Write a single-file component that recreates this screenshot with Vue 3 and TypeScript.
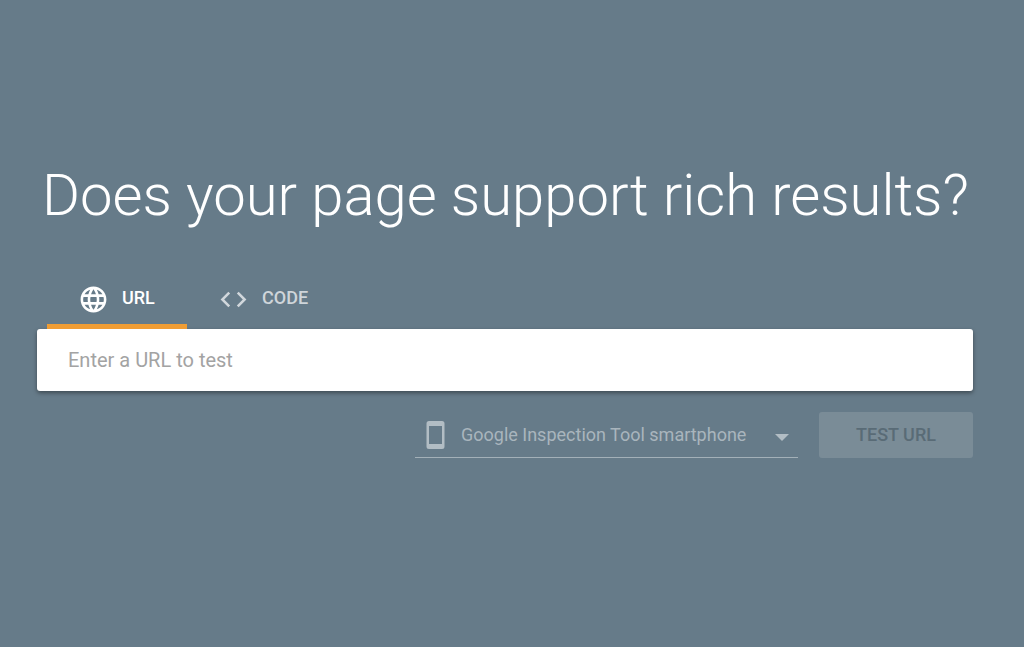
<script setup lang="ts">
import { ref } from 'vue'

type Mode = 'url' | 'code'

const mode = ref<Mode>('url')
const address = ref('')
const agent = ref('smartphone')
</script>

<template>
  <main class="page">
    <h1 class="title">Does your page support rich results?</h1>

    <div class="tabs" role="tablist">
      <button
        class="tab"
        :class="{ active: mode === 'url' }"
        type="button"
        role="tab"
        :aria-selected="mode === 'url'"
        @click="mode = 'url'"
      >
        <svg class="tab-icon" viewBox="0 0 24 24" aria-hidden="true">
          <path d="M11.99 2C6.47 2 2 6.48 2 12s4.47 10 9.99 10C17.52 22 22 17.52 22 12S17.52 2 11.99 2zm6.93 6h-2.95c-.32-1.25-.78-2.45-1.38-3.56 1.84.63 3.37 1.91 4.33 3.56zM12 4.04c.83 1.2 1.48 2.53 1.91 3.96h-3.82c.43-1.43 1.08-2.76 1.91-3.96zM4.26 14C4.1 13.36 4 12.69 4 12s.1-1.36.26-2h3.38c-.08.66-.14 1.32-.14 2s.06 1.34.14 2H4.26zm.82 2h2.95c.32 1.25.78 2.45 1.38 3.56-1.84-.63-3.37-1.9-4.33-3.56zm2.95-8H5.08c.96-1.66 2.49-2.93 4.33-3.56C8.81 5.55 8.35 6.75 8.03 8zM12 19.96c-.83-1.2-1.48-2.53-1.91-3.96h3.82c-.43 1.43-1.08 2.76-1.91 3.96zM14.34 14H9.66c-.09-.66-.16-1.32-.16-2s.07-1.35.16-2h4.68c.09.65.16 1.32.16 2s-.07 1.34-.16 2zm.25 5.56c.6-1.11 1.06-2.31 1.38-3.56h2.95c-.96 1.65-2.49 2.93-4.33 3.56zM16.36 14c.08-.66.14-1.32.14-2s-.06-1.34-.14-2h3.38c.16.64.26 1.31.26 2s-.1 1.36-.26 2h-3.38z" />
        </svg>
        <span>URL</span>
      </button>
      <button
        class="tab"
        :class="{ active: mode === 'code' }"
        type="button"
        role="tab"
        :aria-selected="mode === 'code'"
        @click="mode = 'code'"
      >
        <svg class="tab-icon" viewBox="0 0 24 24" aria-hidden="true">
          <path d="M9.4 16.6L4.8 12l4.6-4.6L8 6l-6 6 6 6 1.4-1.4zm5.2 0l4.6-4.6-4.6-4.6L16 6l6 6-6 6-1.4-1.4z" />
        </svg>
        <span>CODE</span>
      </button>
    </div>

    <form @submit.prevent>
      <input
        v-model="address"
        class="address"
        type="text"
        aria-label="Enter a URL to test"
        placeholder="Enter a URL to test"
      />

      <div class="actions">
        <label class="agent">
          <svg class="phone" viewBox="0 0 20 30" aria-hidden="true">
            <path fill-rule="evenodd" d="M3 1h13a2.500 2.500 0 0 1 2.500 2.500v23a2.500 2.500 0 0 1-2.500 2.500H3a2.500 2.500 0 0 1-2.500-2.500v-23A2.500 2.500 0 0 1 3 1zM3 6v18h13V6z" />
          </svg>
          <select v-model="agent" class="agent-select" aria-label="User agent">
            <option value="smartphone">Google Inspection Tool smartphone</option>
            <option value="desktop">Google Inspection Tool desktop</option>
          </select>
          <svg class="arrow" viewBox="0 0 14 7" aria-hidden="true">
            <path d="M0 0h14L7 7z" />
          </svg>
        </label>
        <button class="submit" type="submit" :disabled="!address">TEST URL</button>
      </div>
    </form>
  </main>
</template>

<style>
body {
  background: #667b89;
}
</style>

<style scoped>
.page {
  box-sizing: border-box;
  padding: 161px 51px 40px 37px;
  font-family: Roboto, "Liberation Sans", sans-serif;
  color: #fff;
}

.title {
  margin: 0 0 39px;
  padding-left: 5px;
  font-size: 58px;
  font-weight: 300;
  line-height: 68px;
}

.tabs {
  display: flex;
  padding-left: 10px;
}

.tab {
  display: flex;
  align-items: center;
  gap: 13px;
  box-sizing: border-box;
  min-width: 140px;
  height: 61px;
  padding: 4px 31px 0;
  border: 0;
  border-bottom: 5px solid transparent;
  background: none;
  color: rgba(255, 255, 255, 0.7);
  font: 500 18px/24px Roboto, "Liberation Sans", sans-serif;
  cursor: pointer;
}

.tab.active {
  border-bottom-color: #f09d34;
  color: #fff;
}

.tab-icon {
  flex: none;
  width: 31px;
  height: 31px;
  margin-top: 2px;
  fill: currentColor;
}

.address {
  display: block;
  box-sizing: border-box;
  width: 100%;
  height: 62px;
  padding: 0 31px;
  border: 0;
  border-radius: 3px;
  background: #fff;
  box-shadow: 0 2px 4px rgba(0, 0, 0, 0.4);
  color: #333;
  font: 400 20px/24px Roboto, "Liberation Sans", sans-serif;
  outline: none;
}

.address::placeholder {
  color: #a3a3a3;
  opacity: 1;
}

.actions {
  display: flex;
  justify-content: flex-end;
  gap: 21px;
  padding-top: 21px;
}

.agent {
  display: flex;
  align-items: center;
  box-sizing: border-box;
  width: 383px;
  height: 46px;
  padding: 0 9px 0 11px;
  border-bottom: 1px solid #a3b0b8;
  color: #b2bdc4;
}

.phone {
  flex: none;
  width: 20px;
  height: 30px;
  margin-right: 15px;
  fill: currentColor;
}

.agent-select {
  flex: 1;
  min-width: 0;
  padding: 0;
  border: 0;
  background: none;
  appearance: none;
  color: #a9b5bd;
  font: 400 18px/24px Roboto, "Liberation Sans", sans-serif;
  outline: none;
}

.arrow {
  flex: none;
  width: 14px;
  height: 7px;
  margin-top: 6px;
  fill: currentColor;
}

.submit {
  box-sizing: border-box;
  min-width: 154px;
  height: 46px;
  padding: 0 24px;
  border: 0;
  border-radius: 3px;
  background: #7a8c97;
  color: #596b76;
  font: 500 18px/24px Roboto, "Liberation Sans", sans-serif;
}
</style>
